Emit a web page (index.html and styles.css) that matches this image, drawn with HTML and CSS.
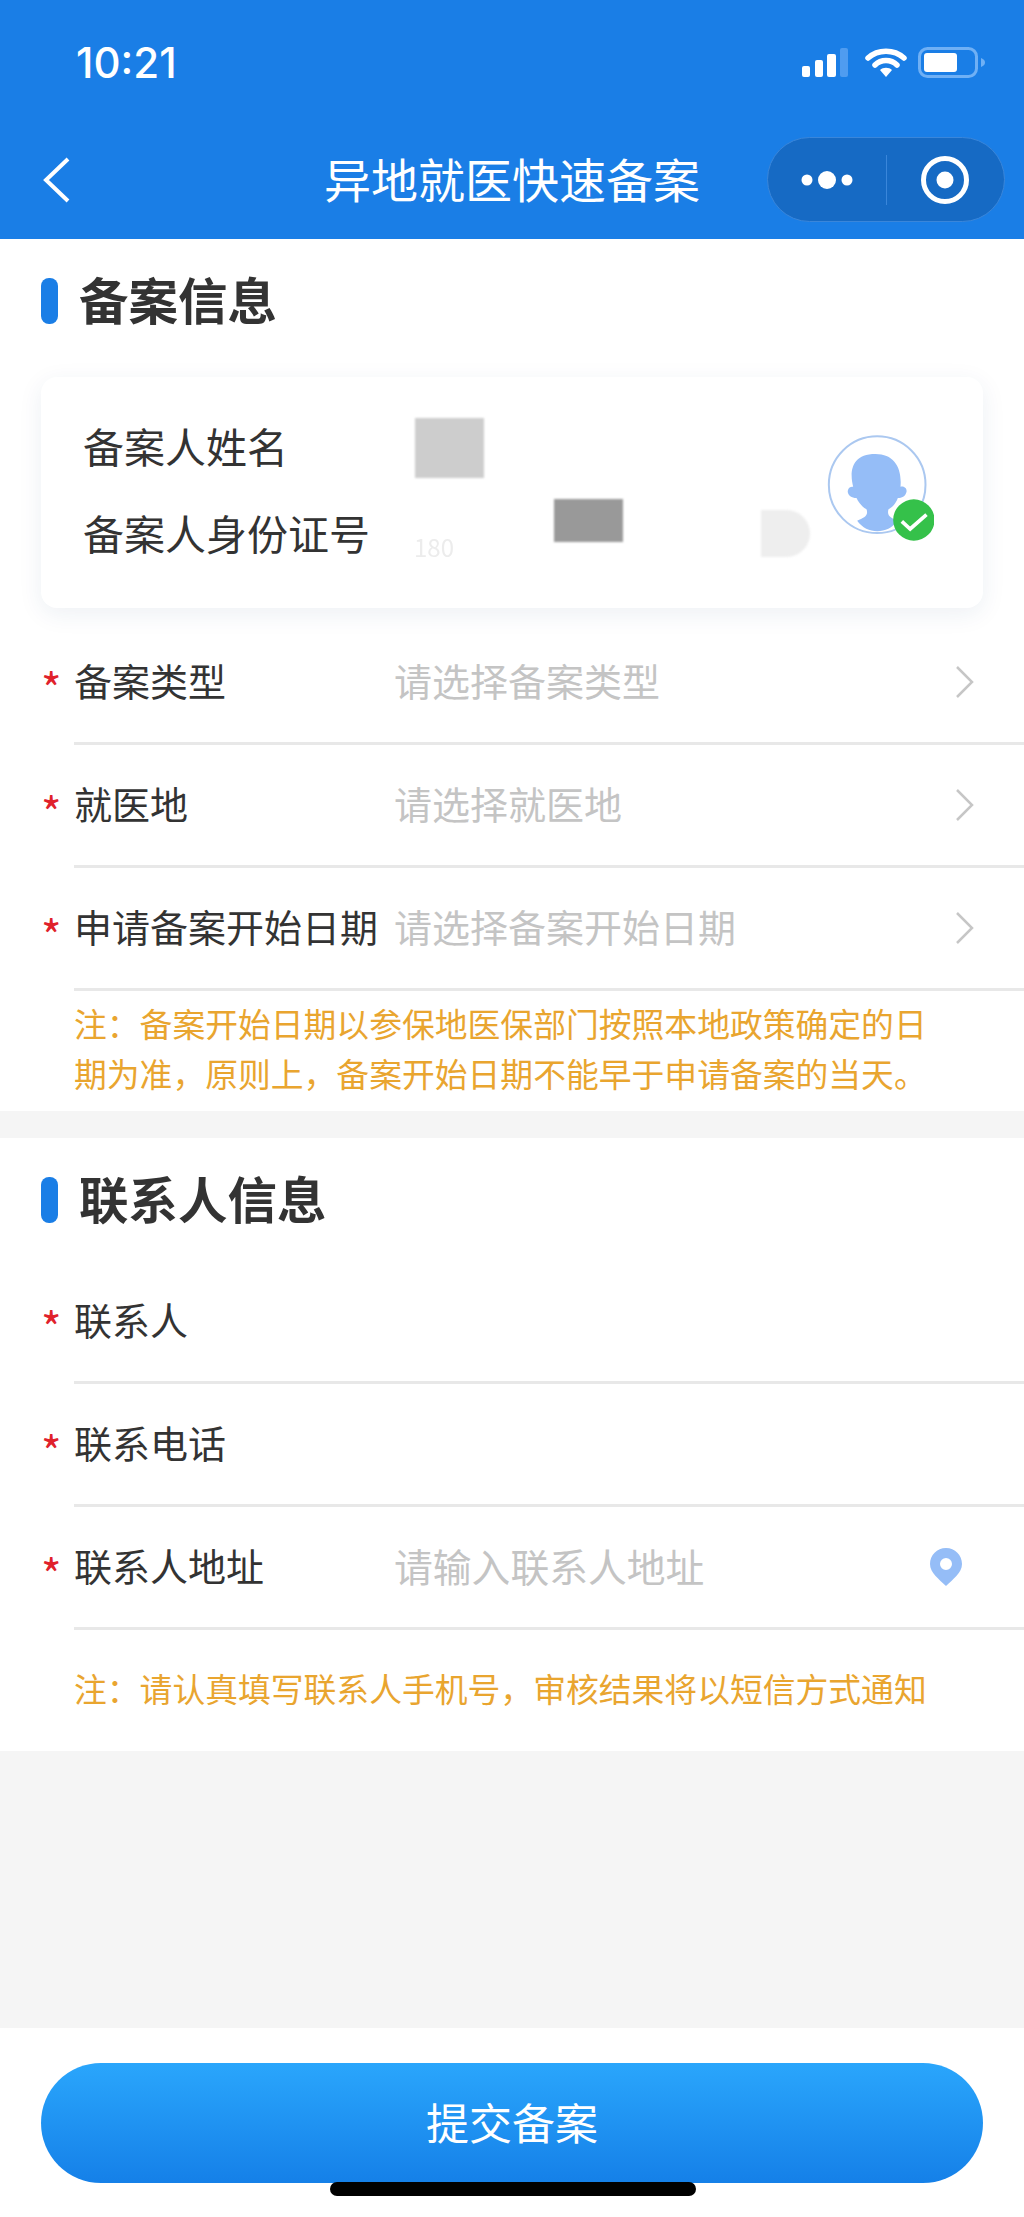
FILE: index.html
```html
<!DOCTYPE html>
<html lang="zh-CN">
<head>
    <meta charset="UTF-8">
    <meta name="viewport" content="width=device-width, initial-scale=1.0">
    <title>异地就医快速备案</title>
    <link rel="stylesheet" href="styles.css">
</head>
<body>
    <div class="page">
        <header class="top-bar">
            <div class="status-bar">
                <span class="time">10:21</span>
                <div class="status-icons">
                    <svg class="signal" width="46" height="29" viewBox="0 0 46 29">
                        <rect x="0" y="18" width="8" height="11" rx="2" fill="#fff"/>
                        <rect x="13" y="12" width="8" height="17" rx="2" fill="#fff"/>
                        <rect x="25" y="6" width="9" height="23" rx="2" fill="#fff"/>
                        <rect x="38" y="0" width="8" height="29" rx="2" fill="#4f9cf0"/>
                    </svg>
                    <svg class="wifi" width="42" height="30" viewBox="0 0 42 30">
                        <path d="M3 11 C13 2 29 2 39 11" fill="none" stroke="#fff" stroke-width="5.5" stroke-linecap="round"/>
                        <path d="M10 18 C16 12 26 12 32 18" fill="none" stroke="#fff" stroke-width="5.5" stroke-linecap="round"/>
                        <path d="M15 23 C18 20 24 20 27 23 L21 30 Z" fill="#fff"/>
                    </svg>
                    <svg class="battery" width="67" height="31" viewBox="0 0 67 31">
                        <rect x="1.5" y="1.5" width="57" height="28" rx="8" fill="none" stroke="#6fb0f5" stroke-width="3"/>
                        <rect x="6" y="6" width="33" height="19" rx="3" fill="#fff"/>
                        <path d="M63 11 C66 12 67 14 67 15.500 C67 17 66 19 63 20 Z" fill="#6fb0f5"/>
                    </svg>
                </div>
            </div>
            <nav class="nav-bar">
                <div class="nav-left">
                    <svg width="27" height="46" viewBox="0 0 27 46">
                        <path d="M25 2 L3 23 L25 44" fill="none" stroke="#fff" stroke-width="4"/>
                    </svg>
                </div>
                <h1 class="nav-title">异地就医快速备案</h1>
                <div class="nav-right">
                    <div class="capsule">
                        <div class="capsule-btn">
                            <svg width="60" height="20" viewBox="0 0 60 20">
                                <circle cx="10" cy="10" r="5.500" fill="#fff"/>
                                <circle cx="30" cy="10" r="9" fill="#fff"/>
                                <circle cx="50" cy="10" r="5.500" fill="#fff"/>
                            </svg>
                        </div>
                        <div class="capsule-line"></div>
                        <div class="capsule-btn">
                            <svg width="48" height="48" viewBox="0 0 48 48">
                                <circle cx="24" cy="24" r="21.500" fill="none" stroke="#fff" stroke-width="5"/>
                                <circle cx="24" cy="24" r="8.500" fill="#fff"/>
                            </svg>
                        </div>
                    </div>
                </div>
            </nav>
        </header>

        <section class="panel">
            <h2 class="panel-title">备案信息</h2>
            <div class="person-card">
                <div class="person-info">
                    <div class="person-row">
                        <span class="person-label">备案人姓名</span>
                    </div>
                    <div class="person-row">
                        <span class="person-label">备案人身份证号</span>
                        <span class="person-value">180</span>
                    </div>
                </div>
                <svg class="avatar" width="107" height="110" viewBox="200 70 320 330">
                    <circle cx="350" cy="222" r="145" fill="#fff" stroke="#abc8f0" stroke-width="6"/>
                    <path d="M290 330 C310 322 325 316 318 296 C300 285 292 270 288 262 C270 262 256 248 264 234 C268 228 274 228 278 228 C268 190 268 130 345 130 C400 130 425 170 420 228 C430 226 440 232 438 244 C434 258 424 262 412 262 C405 280 395 290 384 296 C378 316 392 322 412 330 C380 372 320 372 290 330 Z" fill="#95bdf7"/>
                    <circle cx="460" cy="328" r="62" fill="#35c14a"/>
                    <path d="M424 332 L449 355 L498 312" fill="none" stroke="#fff" stroke-width="11"/>
                </svg>
                <!-- masked values -->
                <div class="mask mask-name"></div>
                <div class="mask mask-id"></div>
                <div class="mask mask-tail"></div>
            </div>
            <div class="form-list">
                <div class="form-row">
                    <span class="star">*</span>
                    <div class="row-body">
                        <span class="row-label">备案类型</span>
                        <span class="row-hint">请选择备案类型</span>
                        <svg class="row-arrow" width="19" height="32" viewBox="0 0 19 32">
                            <path d="M2 1 L17 16 L2 31" fill="none" stroke="#c6c6c6" stroke-width="2.500"/>
                        </svg>
                    </div>
                </div>
                <div class="form-row">
                    <span class="star">*</span>
                    <div class="row-body">
                        <span class="row-label">就医地</span>
                        <span class="row-hint">请选择就医地</span>
                        <svg class="row-arrow" width="19" height="32" viewBox="0 0 19 32">
                            <path d="M2 1 L17 16 L2 31" fill="none" stroke="#c6c6c6" stroke-width="2.500"/>
                        </svg>
                    </div>
                </div>
                <div class="form-row">
                    <span class="star">*</span>
                    <div class="row-body">
                        <span class="row-label">申请备案开始日期</span>
                        <span class="row-hint">请选择备案开始日期</span>
                        <svg class="row-arrow" width="19" height="32" viewBox="0 0 19 32">
                            <path d="M2 1 L17 16 L2 31" fill="none" stroke="#c6c6c6" stroke-width="2.500"/>
                        </svg>
                    </div>
                </div>
            </div>
            <p class="note note-date">注：备案开始日期以参保地医保部门按照本地政策确定的日期为准，原则上，备案开始日期不能早于申请备案的当天。</p>
        </section>

        <section class="panel panel-contact">
            <h2 class="panel-title">联系人信息</h2>
            <div class="form-list">
                <div class="form-row">
                    <span class="star">*</span>
                    <div class="row-body">
                        <span class="row-label">联系人</span>
                    </div>
                </div>
                <div class="form-row">
                    <span class="star">*</span>
                    <div class="row-body">
                        <span class="row-label">联系电话</span>
                    </div>
                </div>
                <div class="form-row">
                    <span class="star">*</span>
                    <div class="row-body">
                        <span class="row-label">联系人地址</span>
                        <span class="row-hint row-hint-input">请输入联系人地址</span>
                        <svg class="row-pin" width="32" height="38" viewBox="0 0 32 38">
                            <path fill-rule="evenodd" d="M16 0 C25 0 32 7 32 16 C32 25 23 31 16 38 C9 31 0 25 0 16 C0 7 7 0 16 0 Z M16 10 A6 6 0 1 0 16 22 A6 6 0 1 0 16 10 Z" fill="#95bdf7"/>
                        </svg>
                    </div>
                </div>
            </div>
            <p class="note note-contact">注：请认真填写联系人手机号，审核结果将以短信方式通知</p>
        </section>

        <div class="spacer"></div>

        <footer class="bottom-bar">
            <button type="button" class="submit-btn">提交备案</button>
            <div class="home-bar"></div>
        </footer>
    </div>
</body>
</html>
```

FILE: styles.css
```css
* {
    box-sizing: border-box;
}
body {
    margin: 0;
    font-family: "Noto Sans CJK SC", "Noto Sans", sans-serif;
    color: #333;
    background: #f5f5f5;
}
.page {
    width: 1024px;
    height: 2217px;
    display: flex;
    flex-direction: column;
    overflow: hidden;
}

/* header */
.top-bar {
    height: 239px;
    background: #1a7ee6;
    color: #fff;
}
.status-bar {
    height: 124px;
    display: flex;
    justify-content: space-between;
    align-items: center;
    padding: 0 39px 0 76px;
}
.time {
    font-family: Inter, "Liberation Sans", sans-serif;
    font-size: 42px;
    font-weight: 500;
}
.status-icons {
    display: flex;
    align-items: center;
    gap: 14px;
}
.status-icons .wifi {
    margin-left: 3px;
    margin-right: -3px;
}
.nav-bar {
    height: 115px;
    display: grid;
    grid-template-columns: 1fr auto 1fr;
    align-items: center;
    padding: 0 19px 4px;
}
.nav-left {
    padding-left: 24px;
}
.nav-left svg {
    display: block;
}
.nav-title {
    margin: 0;
    padding-bottom: 4px;
    font-size: 47px;
    font-weight: 400;
    line-height: 60px;
}
.nav-right {
    display: flex;
    justify-content: flex-end;
}
.capsule {
    width: 238px;
    height: 85px;
    display: flex;
    align-items: center;
    background: #166ac4;
    border: 1px solid #3a86da;
    border-radius: 43px;
}
.capsule-btn {
    flex: 1;
    display: flex;
    justify-content: center;
}
.capsule-btn svg {
    display: block;
}
.capsule-line {
    width: 1px;
    height: 50px;
    background: #3a86da;
}

/* panels */
.panel {
    background: #fff;
    padding-top: 39px;
}
.panel-contact {
    margin-top: 27px;
}
.panel-title {
    margin: 0 0 0 41px;
    height: 46px;
    display: flex;
    align-items: flex-start;
    gap: 21px;
    font-size: 49.500px;
    font-weight: 700;
    line-height: 41px;
}
.panel-title::before {
    content: "";
    width: 17px;
    height: 46px;
    background: #1a7ee6;
    border-radius: 8px;
}

/* card */
.person-card {
    position: relative;
    height: 231px;
    margin: 53px 41px 13px;
    padding: 24px 49px 0 42px;
    display: flex;
    justify-content: space-between;
    background: #fff;
    border-radius: 16px;
    box-shadow: 0 6px 24px rgba(30, 60, 120, 0.08);
}
.person-row {
    display: flex;
    height: 87px;
    align-items: center;
    font-size: 41px;
}
.person-label {
    width: 331px;
}
.person-value {
    font-size: 24px;
    color: #ececec;
    padding-top: 30px;
    filter: blur(0.6px);
}
.avatar {
    margin-top: 33px;
}
.mask {
    position: absolute;
    filter: blur(1px);
}
.mask-name {
    left: 374px;
    top: 41px;
    width: 69px;
    height: 60px;
    background: #cdcdcd;
}
.mask-id {
    left: 513px;
    top: 122px;
    width: 69px;
    height: 43px;
    background: #999;
}
.mask-tail {
    left: 720px;
    top: 133px;
    width: 49px;
    height: 47px;
    background: #eee;
    border-radius: 0 24px 24px 0;
}

/* form rows */
.form-row {
    height: 124px;
    display: flex;
    align-items: stretch;
}
.form-list .form-row + .form-row {
    height: 123px;
}
.star {
    width: 74px;
    padding: 8px 0 0 41px;
    align-self: center;
    font-size: 44px;
    line-height: 38px;
    color: #e0212b;
}
.row-body {
    flex: 1;
    display: flex;
    align-items: center;
    padding: 0 50px 5px 0;
    border-bottom: 3px solid #e8e8e8;
    font-size: 38px;
}
.row-label {
    width: 320px;
    flex: none;
}
.row-hint {
    flex: 1;
    color: #c4c4c4;
}
.row-hint-input {
    font-size: 38.800px;
}
.row-arrow {
    margin-top: 5px;
}
.row-pin {
    margin: 5px 12px 0 0;
}
.panel-contact .panel-title {
    margin-bottom: 37px;
}

/* notes */
.note {
    margin: 0;
    padding: 7px 86px 13px 74px;
    font-size: 32.800px;
    line-height: 50px;
    color: #e9a52f;
}
.note-contact {
    padding-top: 32px;
    padding-bottom: 38px;
    line-height: 51px;
}

/* bottom */
.spacer {
    flex: 1;
}
.bottom-bar {
    position: relative;
    height: 189px;
    padding: 35px 41px 0;
    background: #fff;
}
.submit-btn {
    display: block;
    width: 100%;
    height: 120px;
    padding: 0 0 5px;
    border: none;
    border-radius: 60px;
    background: linear-gradient(to bottom, #2aa6fc, #1580e8);
    color: #fff;
    font-family: inherit;
    font-size: 43px;
}
.home-bar {
    position: absolute;
    left: 330px;
    top: 154px;
    width: 366px;
    height: 14px;
    background: #000;
    border-radius: 7px;
}
```
